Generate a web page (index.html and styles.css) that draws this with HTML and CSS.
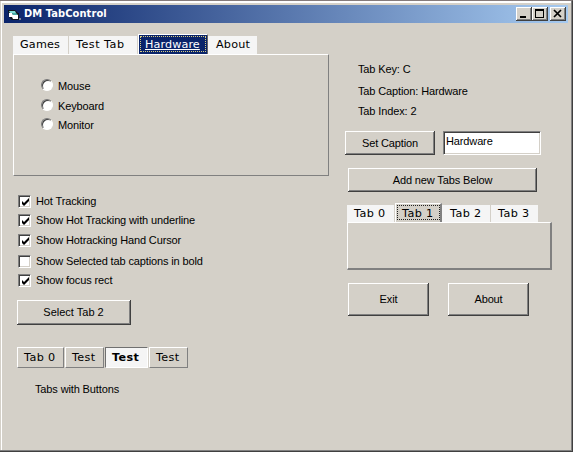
FILE: index.html
```html
<!DOCTYPE html>
<html lang="en">
<head>
<meta charset="utf-8">
<title>DM TabControl</title>
<link rel="stylesheet" href="styles.css">
</head>
<body>
<div class="window">
  <header class="titlebar">
    <svg class="app-icon" width="13" height="13" viewBox="0 0 13 13"><path d="M0 2h7l3 3h1v7H4L1 9z" fill="#10151c"/><path d="M1 3h6l1 2H2z" fill="#7fdcd6"/><path d="M1 5h3l1 2h5v4H5L4 9H1z" fill="#fff"/><path d="M4 5h4l2 2H5z" fill="#48aaa4"/><path d="M11 10h2v2h-2z" fill="#7c8494"/></svg>
    <h1>DM TabControl</h1>
    <div class="controls">
      <span class="control"><svg width="16" height="14"><path d="M4 9h6v2H4z"/></svg></span>
      <span class="control"><svg width="16" height="14"><path d="M3 2h9v9H3zM4 4v6h7V4z" fill-rule="evenodd"/></svg></span>
      <span class="control close"><svg width="16" height="14"><path d="M4 3l7 7M11 3l-7 7" stroke="#000" stroke-width="1.7"/></svg></span>
    </div>
  </header>
  <main>
    <section class="left">
      <nav class="tabs">
        <span class="tab games">Games</span><span class="tab test">Test Tab</span><span class="tab hardware"><u>Hardware</u></span><span class="tab info">About</span>
      </nav>
      <div class="panel">
        <label class="option"><i class="radio"></i>Mouse</label>
        <label class="option"><i class="radio"></i>Keyboard</label>
        <label class="option"><i class="radio"></i>Monitor</label>
      </div>
      <div class="checks">
        <label class="check"><i class="box"><svg width="9" height="9"><path d="M1 3v3l2 2 5-5V0L3 5z"/></svg></i><span>Hot Tracking</span></label>
        <label class="check"><i class="box"><svg width="9" height="9"><path d="M1 3v3l2 2 5-5V0L3 5z"/></svg></i><span>Show Hot Tracking with underline</span></label>
        <label class="check"><i class="box"><svg width="9" height="9"><path d="M1 3v3l2 2 5-5V0L3 5z"/></svg></i><span>Show Hotracking Hand Cursor</span></label>
        <label class="check"><i class="box"></i><span>Show Selected tab captions in bold</span></label>
        <label class="check"><i class="box"><svg width="9" height="9"><path d="M1 3v3l2 2 5-5V0L3 5z"/></svg></i><span>Show focus rect</span></label>
      </div>
      <div class="button select">Select Tab 2</div>
      <nav class="button-tabs">
        <span class="push first">Tab 0</span><span class="push">Test</span><span class="push pressed">Test</span><span class="push">Test</span>
      </nav>
      <p class="note">Tabs with Buttons</p>
    </section>
    <section class="right">
      <div class="details">
        <p>Tab Key: C</p>
        <p>Tab Caption: Hardware</p>
        <p>Tab Index: 2</p>
      </div>
      <div class="caption-row"><div class="button set">Set Caption</div><div class="field">Hardware</div></div>
      <div class="button add">Add new Tabs Below</div>
      <nav class="tabs small">
        <span class="tab t0">Tab 0</span><span class="tab t1">Tab 1</span><span class="tab t2">Tab 2</span><span class="tab t3">Tab 3</span>
      </nav>
      <div class="panel-small"></div>
      <div class="actions"><div class="button">Exit</div><div class="button">About</div></div>
    </section>
  </main>
</div>
</body>
</html>
```
FILE: styles.css
```css
* { box-sizing: border-box; }
html, body { margin: 0; width: 573px; height: 452px; overflow: hidden; background: #d4d0c8; }
body { font: 11px/14px "Liberation Sans", sans-serif; letter-spacing: -.13px; color: #000; white-space: nowrap; }
p, h1 { margin: 0; }

.window {
  height: 452px;
  padding: 4px 4px 2px;
  border: solid;
  border-width: 1px 1px 1px 0;
  border-color: #857b7b #404040 #404040;
  background: #d4d0c8;
  box-shadow: inset -1px -1px #808080, inset 1px 0 #d4d0c8, inset 2px 2px #fff;
}
.titlebar { display: flex; align-items: center; height: 18px; background: linear-gradient(90deg, #0a246a, #a6caf0); }
.app-icon { margin-left: 4px; }
.titlebar h1 { margin-left: 3px; font: bold 11px/18px "DejaVu Sans Condensed", "DejaVu Sans", sans-serif; font-stretch: condensed; letter-spacing: .1px; color: #fff; }
.controls { display: flex; margin-left: auto; margin-right: 2px; }
.control { width: 16px; height: 14px; background: #d4d0c8; box-shadow: inset -1px -1px #404040, inset 1px 1px #fff, inset -2px -2px #808080; }
.control svg { display: block; }
.close { margin-left: 2px; }

main { display: flex; }
.left { width: 341px; padding: 11px 0 0 9px; }
.right { padding: 39px 0 0; }

.tabs { display: flex; align-items: flex-end; height: 20px; font: 11.2px/18px "DejaVu Sans", sans-serif; letter-spacing: .2px; }
.tab { height: 18px; padding-left: 7px; background: #f5f5f5; border-right: 1px solid #d4d0c8; }
.games { width: 56px; }
.test { width: 69px; letter-spacing: .5px; }
.hardware { width: 70px; height: 20px; color: #fff; background: #0a246a; border: solid; border-width: 1px 1px 0; border-color: #fff #666 #fff #fff; outline: 1px dotted #d8cc83; outline-offset: -3px; padding-left: 6px; line-height: 20px; letter-spacing: .1px; }
.info { width: 50px; padding-left: 8px; }

.panel { width: 316px; height: 122px; padding: 24px 0 0 27px; border: 1px solid #808080; border-top-color: #fff; border-left-color: #fff; }
.option { display: flex; align-items: center; gap: 5px; height: 14px; margin-bottom: 6px; }
.option:nth-child(2) { margin-bottom: 5px; }
.radio { width: 12px; height: 12px; margin-top: -2px; border: 1px solid; border-color: #777 #fff #fff #777; border-radius: 50%; background: #fff; box-shadow: inset 1px 1px #404040; }

.checks { display: grid; grid-template-rows: 19px 20px 21px 19px 18px; padding: 19px 0 0 5px; }
.check { display: flex; align-items: flex-start; gap: 5px; height: 14px; }
.check span { line-height: 13px; }
.box { width: 13px; height: 13px; padding: 2px; background: #fff; border: 1px solid; border-color: #808080 #fff #fff #808080; box-shadow: inset 1px 1px #404040, inset -1px -1px #d4d0c8; }
.box svg { display: block; }

.button { display: flex; align-items: center; justify-content: center; background: #d4d0c8; box-shadow: inset -1px -1px #404040, inset 1px 1px #fff, inset -2px -2px #808080; }
.select { width: 114px; height: 25px; margin: 8px 0 0 4px; letter-spacing: 0; padding: 0 1px 1px 0; }
.button-tabs { display: flex; gap: 1px; margin: 22px 0 0 4px; font: 11.2px/20px "DejaVu Sans", sans-serif; letter-spacing: .4px; }
.push { width: 39px; height: 21px; padding-left: 6px; border: 1px solid; border-color: #fff #808080 #808080 #fff; line-height: 20px; }
.first { width: 47px; }
.pressed { width: 43px; font-weight: bold; background: #f5f5f5; border-color: #707070 #fff #fff #707070; }
.note { margin: 14px 0 0 22px; }

.details { padding-left: 13px; }
.details p { height: 22px; }
.details p + p { height: 20px; }
.caption-row { display: flex; gap: 8px; margin-top: 7px; }
.set { width: 90px; height: 24px; }
.field { width: 98px; height: 24px; padding: 2px 0 0 2px; background: #fff; border: 1px solid; border-color: #808080 #fff #fff #808080; box-shadow: inset 1px 1px #404040, inset -1px -1px #d4d0c8; }
.add { width: 189px; height: 24px; margin: 13px 0 0 3px; }
.small { height: 19px; margin: 11px 0 0 2px; letter-spacing: .4px; }
.small .tab { height: 17px; line-height: 18px; }
.t0 { width: 48px; }
.small .t1 { width: 47px; height: 19px; line-height: 20px; background: #d4d0c8; border: solid; border-width: 1px 2px 0 1px; border-color: #fff #808080 #fff #fff; outline: 1px dotted #222; outline-offset: -3px; padding-left: 6px; }
.small .t2 { width: 49px; padding-left: 8px; }
.t3 { width: 48px; }
.panel-small { width: 205px; height: 48px; margin-left: 2px; border: solid; border-width: 1px 2px 2px 1px; border-color: #fff #808080 #808080 #fff; }
.actions { display: flex; gap: 19px; margin: 13px 0 0 3px; }
.actions .button { width: 81px; height: 33px; padding-bottom: 1px; }
```
